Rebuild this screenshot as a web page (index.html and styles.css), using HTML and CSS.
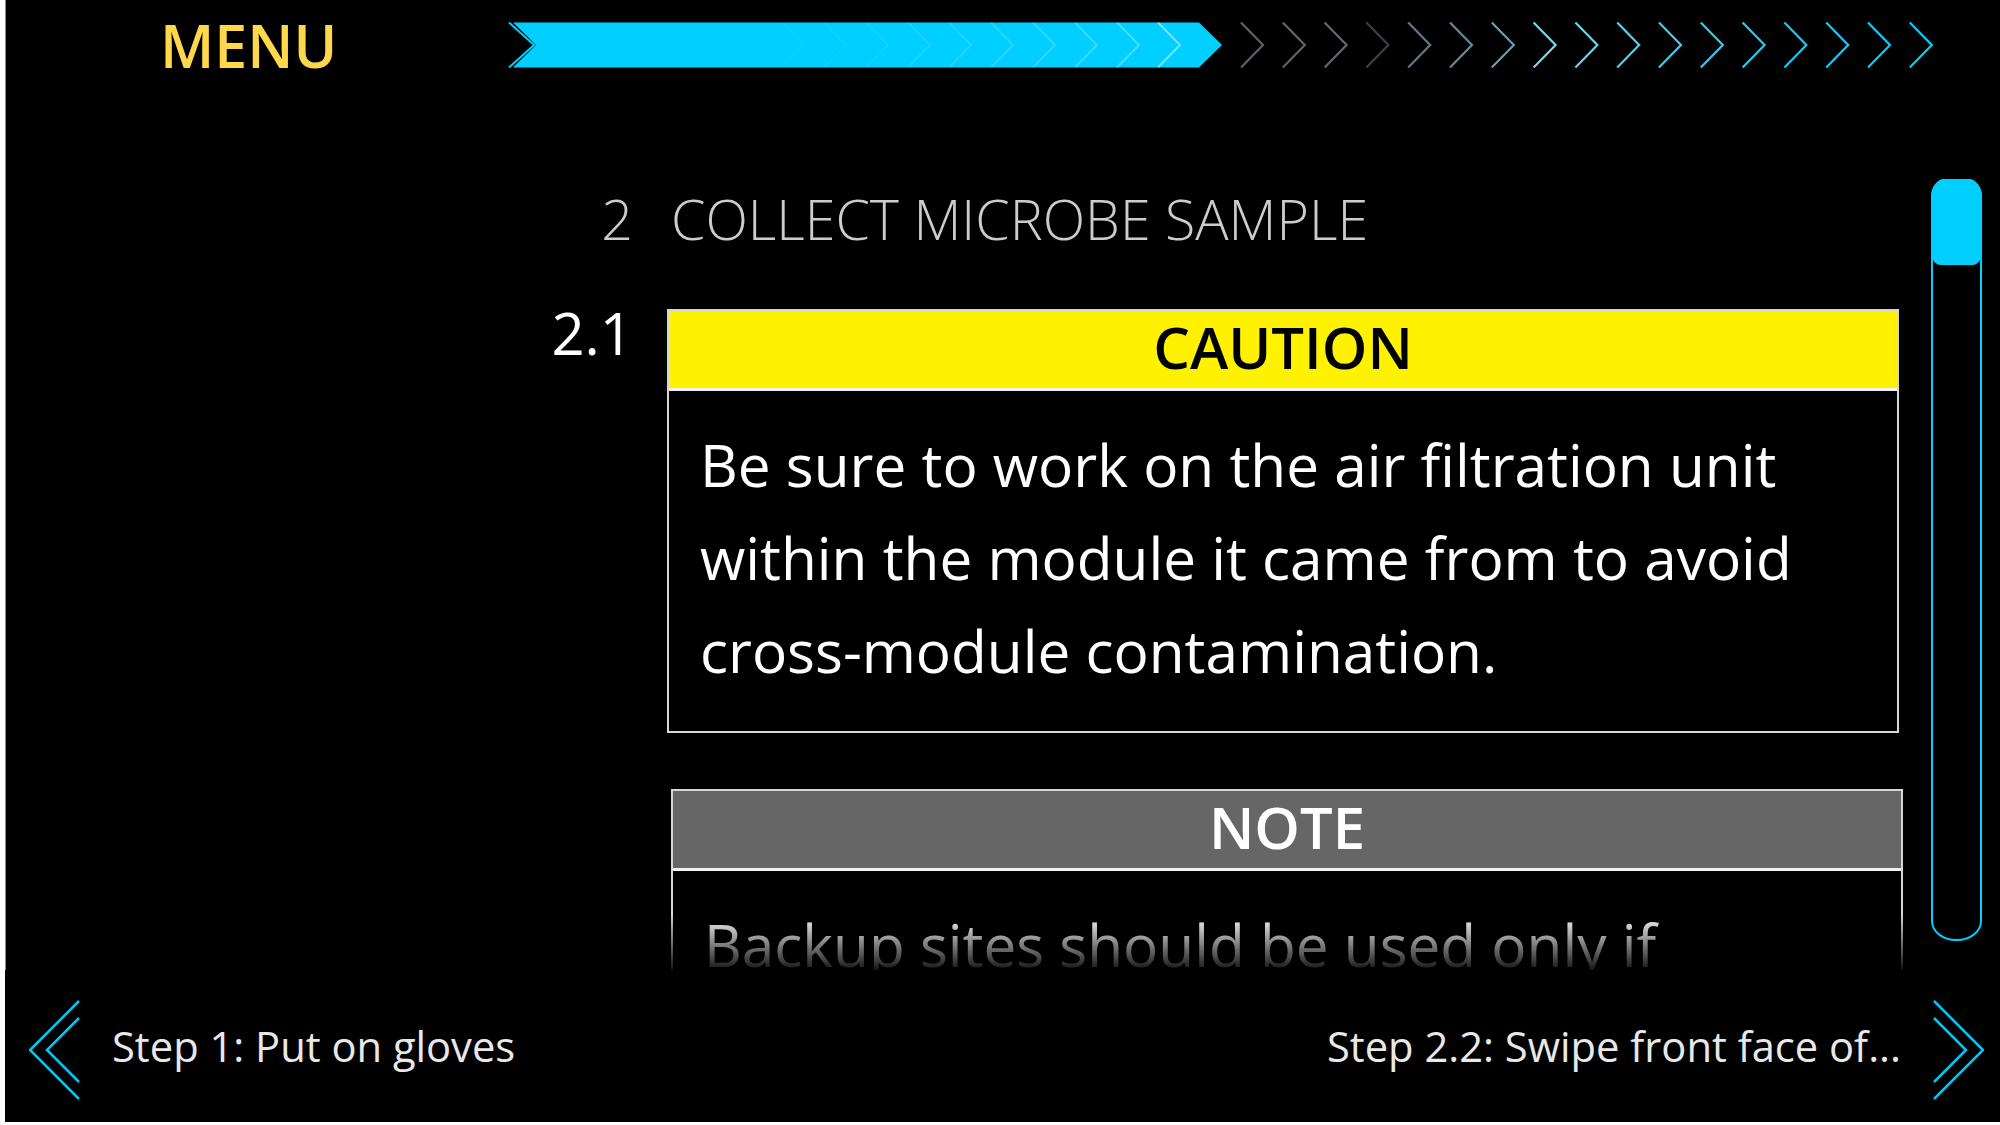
FILE: index.html
```html
<!DOCTYPE html>
<html lang="en">
<head>
<meta charset="utf-8">
<title>Procedure</title>
<link rel="stylesheet" href="styles.css">
</head>
<body>
<div class="screen">
  <header class="top">
    <div class="menu">MENU</div>
    <svg class="progress" width="1435" height="50" viewBox="0 0 1435 50">
      <polyline points="4,2.5 29,25 4,47.5" fill="none" stroke="#00cfff" stroke-width="2"/>
      <polygon points="8,2.5 694,2.5 717,25 694,47.5 8,47.5 31,25" fill="#00cfff"/>
      <g fill="none" stroke="#ffffff" stroke-width="2">
        <polyline points="277,2.5 299,25 277,47.5" stroke-opacity="0.03"/>
        <polyline points="319,2.5 341,25 319,47.5" stroke-opacity="0.05"/>
        <polyline points="361,2.5 383,25 361,47.5" stroke-opacity="0.07"/>
        <polyline points="403,2.5 425,25 403,47.5" stroke-opacity="0.09"/>
        <polyline points="444,2.5 466,25 444,47.5" stroke-opacity="0.12"/>
        <polyline points="486,2.5 508,25 486,47.5" stroke-opacity="0.15"/>
        <polyline points="528,2.5 550,25 528,47.5" stroke-opacity="0.18"/>
        <polyline points="570,2.5 592,25 570,47.5" stroke-opacity="0.22"/>
        <polyline points="612,2.5 634,25 612,47.5" stroke-opacity="0.28"/>
        <polyline points="653,2.5 675,25 653,47.5" stroke-opacity="0.45"/>
      </g>
      <g fill="none" stroke-width="2.2">
        <polyline points="736,2.5 758,25 736,47.5" stroke="#5b6164"/>
        <polyline points="777.8,2.5 799.8,25 777.8,47.5" stroke="#5d6367"/>
        <polyline points="819.6,2.5 841.6,25 819.6,47.5" stroke="#5e6a70"/>
        <polyline points="861.4,2.5 883.4,25 861.4,47.5" stroke="#3a4144"/>
        <polyline points="903.2,2.5 925.2,25 903.2,47.5" stroke="#5f7a85"/>
        <polyline points="945,2.5 967,25 945,47.5" stroke="#64899a"/>
        <polyline points="986.8,2.5 1008.8,25 986.8,47.5" stroke="#6a9cad"/>
        <polyline points="1028.6,2.5 1050.6,25 1028.6,47.5" stroke="#7ad6ee"/>
        <polyline points="1070.4,2.5 1092.4,25 1070.4,47.5" stroke="#6cd1ea"/>
        <polyline points="1112.2,2.5 1134.2,25 1112.2,47.5" stroke="#5ccde9"/>
        <polyline points="1154,2.5 1176,25 1154,47.5" stroke="#4acaeb"/>
        <polyline points="1195.8,2.5 1217.8,25 1195.8,47.5" stroke="#3ac8ee"/>
        <polyline points="1237.6,2.5 1259.6,25 1237.6,47.5" stroke="#2ac9f1"/>
        <polyline points="1279.4,2.5 1301.4,25 1279.4,47.5" stroke="#1acaf5"/>
        <polyline points="1321.2,2.5 1343.2,25 1321.2,47.5" stroke="#10ccf8"/>
        <polyline points="1363,2.5 1385,25 1363,47.5" stroke="#08cdfc"/>
        <polyline points="1404.8,2.5 1426.8,25 1404.8,47.5" stroke="#00cfff"/>
      </g>
    </svg>
  </header>

  <main class="main">
    <section class="scroll">
      <div class="row title-row">
        <div class="num title-num">2</div>
        <h1 class="title">COLLECT MICROBE SAMPLE</h1>
      </div>
      <div class="row step-row">
        <div class="num step-num">2.1</div>
        <div class="step-body">
          <div class="callout caution">
            <div class="callout-head">CAUTION</div>
            <p class="callout-text">Be sure to work on the air filtration unit within the module it came from to avoid cross-module contamination.</p>
          </div>
          <div class="callout note">
            <div class="callout-head">NOTE</div>
            <p class="callout-text">Backup sites should be used only if</p>
          </div>
        </div>
      </div>
    </section>
    <aside class="scrollbar">
      <div class="thumb"></div>
    </aside>
  </main>

  <footer class="nav">
    <div class="nav-item">
      <svg class="nav-chev" width="54" height="100" viewBox="0 0 54 100">
        <polyline points="50,1 1,50 50,99" fill="none" stroke="#00c8f5" stroke-width="2.5"/>
        <polyline points="50,18 18,50 50,82" fill="none" stroke="#00c8f5" stroke-width="2.5"/>
      </svg>
      <span class="nav-text">Step 1: Put on gloves</span>
    </div>
    <div class="nav-item">
      <span class="nav-text">Step 2.2: Swipe front face of...</span>
      <svg class="nav-chev" width="54" height="100" viewBox="0 0 54 100">
        <polyline points="4,1 53,50 4,99" fill="none" stroke="#00c8f5" stroke-width="2.5"/>
        <polyline points="4,18 36,50 4,82" fill="none" stroke="#00c8f5" stroke-width="2.5"/>
      </svg>
    </div>
  </footer>
</div>
</body>
</html>
```

FILE: styles.css
```css
html, body {
  margin: 0;
  padding: 0;
  background: #ffffff;
}

body {
  padding-left: 5px;
  font-family: "Open Sans", "Noto Sans", "Liberation Sans", sans-serif;
}

.screen {
  width: 1995px;
  height: 1122px;
  background: #000000;
  display: flex;
  flex-direction: column;
  overflow: hidden;
}

/* ---------- top bar ---------- */
.top {
  height: 89px;
  flex: none;
  display: flex;
  align-items: center;
  padding-left: 155px;
  box-shadow: inset 1px 0 0 #8a8a8a;
}

.menu {
  width: 345px;
  flex: none;
  font-size: 59px;
  font-weight: 600;
  line-height: 82px;
  color: #fdd84b;
}

.progress {
  display: block;
  flex: none;
}

/* ---------- main ---------- */
.main {
  flex: none;
  height: 881px;
  display: flex;
  box-shadow: inset 1px 0 0 #8a8a8a;
}

.scroll {
  flex: 1;
  min-width: 0;
  overflow: hidden;
  padding: 92px 10px 0 528px;
  -webkit-mask-image: linear-gradient(to bottom, #000 825px, transparent 886px);
  mask-image: linear-gradient(to bottom, #000 825px, transparent 886px);
}

.row {
  display: grid;
  grid-template-columns: 100px 1fr;
  column-gap: 34px;
  align-items: start;
}

.num {
  text-align: right;
}

.title-num {
  font-size: 55.5px;
  font-weight: 300;
  line-height: 75px;
  color: #cccccc;
}

.title {
  margin: 0;
  padding-left: 4px;
  font-size: 55.5px;
  font-weight: 300;
  line-height: 75px;
  color: #cccccc;
  white-space: nowrap;
}

.step-row {
  margin-top: 53px;
}

.step-num {
  font-size: 58px;
  font-weight: 400;
  line-height: 47px;
  color: #ffffff;
}

.step-body {
  display: flex;
  flex-direction: column;
}

.callout {
  border: 2px solid #d6d6d6;
}

.callout-head {
  height: 71px;
  padding-bottom: 6px;
  border-bottom: 3px solid #f2f2f2;
  text-align: center;
  font-size: 58px;
  font-weight: 600;
  line-height: 71px;
}

.caution .callout-head {
  background: #fff200;
  color: #000000;
}

.note {
  margin: 56px -4px 0 4px;
}

.note .callout-head {
  background: #666666;
  color: #ffffff;
}

.callout-text {
  margin: 0;
  padding: 27px 28px 34px 31px;
  font-size: 58.5px;
  font-weight: 400;
  line-height: 93px;
  color: #ffffff;
}

.note .callout-text {
  padding-left: 31px;
}

/* ---------- scrollbar ---------- */
.scrollbar {
  flex: none;
  width: 51px;
  height: 762px;
  box-sizing: border-box;
  margin: 90px 18px 0 22px;
  border: 2px solid #00cfff;
  border-radius: 14px 14px 25px 25px / 18px 18px 20px 20px;
}

.thumb {
  height: 86px;
  margin: -2px -2px 0 -2px;
  background: #00cfff;
  border-radius: 14px 14px 10px 10px / 18px 18px 12px 12px;
}

/* ---------- footer nav ---------- */
.nav {
  flex: 1;
  display: flex;
  align-items: center;
  justify-content: space-between;
  padding: 0 16px 0 24px;
}

.nav-item {
  display: flex;
  align-items: center;
  gap: 29px;
}

.nav-chev {
  display: block;
  flex: none;
  margin-top: 8px;
}

.nav-text {
  font-size: 41.7px;
  font-weight: 400;
  line-height: 56px;
  color: #e8e8e8;
}
```
